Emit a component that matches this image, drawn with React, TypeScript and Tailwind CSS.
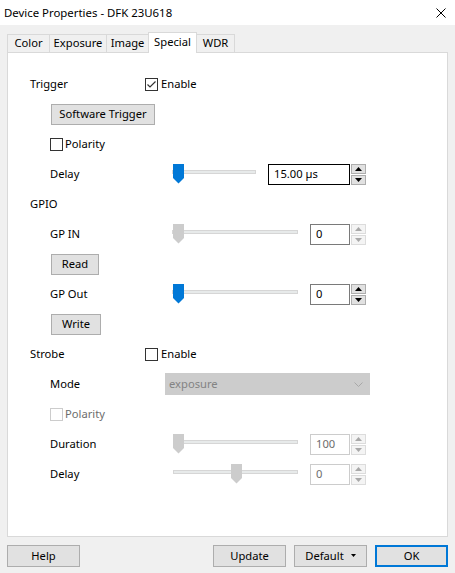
import React from 'react';

const font = { fontFamily: '"Segoe UI", "Noto Sans", "Liberation Sans", sans-serif' };

function Checkbox({ checked = false, disabled = false }: { checked?: boolean; disabled?: boolean }) {
  return (
    <div
      className={`w-[13px] h-[13px] bg-white border flex items-center justify-center ${
        disabled ? 'border-[#cccccc]' : 'border-[#333333]'
      }`}
    >
      {checked && (
        <svg width="11" height="11" viewBox="0 0 11 11">
          <path d="M1.5 5.5 L4 8 L9.5 2.5" fill="none" stroke="#333333" strokeWidth="1.2" />
        </svg>
      )}
    </div>
  );
}

function Btn({ label, w, className = '' }: { label: React.ReactNode; w: string; className?: string }) {
  return (
    <div
      className={`${w} h-[21px] bg-[#e1e1e1] border border-[#adadad] flex items-center justify-center text-black ${className}`}
    >
      {label}
    </div>
  );
}

function Slider({ w, pos, disabled = false }: { w: string; pos: number; disabled?: boolean }) {
  return (
    <div className={`relative ${w} h-[20px]`}>
      <div className="absolute left-0 right-0 top-[6px] h-[4px] bg-[#e7eaea] border border-[#d6d6d6]" />
      <svg
        className="absolute top-0"
        style={{ left: pos }}
        width="11"
        height="20"
        viewBox="0 0 11 20"
      >
        <polygon points="0,0 11,0 11,14 5.5,19.5 0,14" fill={disabled ? '#cccccc' : '#0078d7'} />
      </svg>
    </div>
  );
}

function Arrow({ up, color }: { up: boolean; color: string }) {
  return (
    <svg width="7" height="4" viewBox="0 0 7 4">
      <polygon points={up ? '3.5,0 7,4 0,4' : '0,0 7,0 3.5,4'} fill={color} />
    </svg>
  );
}

function Spin({ disabled = false }: { disabled?: boolean }) {
  const box = disabled
    ? 'bg-[#f4f4f4] border-[#dcdcdc]'
    : 'bg-[#e1e1e1] border-[#adadad]';
  const c = disabled ? '#a8a8a8' : '#000000';
  return (
    <div className="ml-[1px] w-[15px] h-[21px] flex flex-col gap-[1px]">
      <div className={`flex-1 border ${box} flex items-center justify-center`}>
        <Arrow up color={c} />
      </div>
      <div className={`flex-1 border ${box} flex items-center justify-center`}>
        <Arrow up={false} color={c} />
      </div>
    </div>
  );
}

function Edit({
  w,
  value,
  focused = false,
  disabled = false,
  spinDisabled = false,
}: {
  w: string;
  value: string;
  focused?: boolean;
  disabled?: boolean;
  spinDisabled?: boolean;
}) {
  const border = focused ? 'border-black' : disabled ? 'border-[#cccccc]' : 'border-[#7a7a7a]';
  return (
    <div className="flex items-center">
      <div
        className={`${w} h-[21px] bg-white border ${border} flex items-center pl-[5px] ${
          disabled ? 'text-[#6d6d6d]' : 'text-black'
        }`}
      >
        {value}
      </div>
      <Spin disabled={spinDisabled || disabled} />
    </div>
  );
}

function Row({ children, indent = false }: { children: React.ReactNode; indent?: boolean }) {
  return (
    <div className={`flex h-[30px] items-center ${indent ? 'pl-[42px]' : 'pl-[22px]'}`}>{children}</div>
  );
}

const tabs = [
  { name: 'Color', w: 'w-[43px]' },
  { name: 'Exposure', w: 'w-[58px]' },
  { name: 'Image', w: 'w-[43px]' },
  { name: 'Special', w: 'w-[49px]', active: true },
  { name: 'WDR', w: 'w-[39px]' },
];

export default function App() {
  return (
    <div className="w-[455px] h-[573px] bg-[#f0f0f0] flex flex-col text-[11.2px] text-black overflow-hidden" style={font}>
      {/* title bar */}
      <div className="h-[25px] bg-white flex items-center justify-between pl-[4px] pr-[9px] text-[11.4px]">
        <span>Device Properties - DFK 23U618</span>
        <svg width="10" height="10" viewBox="0 0 10 10">
          <path d="M0.5 0.5 L9.5 9.5 M9.5 0.5 L0.5 9.5" stroke="#000" strokeWidth="1" />
        </svg>
      </div>

      {/* tabs */}
      <div className="mt-[7px] px-[7px] flex items-end h-[20px]">
        {tabs.map((t) => (
          <div
            key={t.name}
            className={`${t.w} -ml-px first:ml-0 flex justify-center border border-b-0 border-[#d9d9d9] ${
              t.active
                ? 'h-[21px] bg-white relative z-10 -mb-px items-start pt-[1px]'
                : 'h-[18px] bg-[#f0f0f0] items-center'
            }`}
          >
            {t.name}
          </div>
        ))}
      </div>

      {/* panel */}
      <div className="mx-[7px] h-[485px] bg-white border border-[#d9d9d9] pt-[16px]">
        <Row>
          <span className="w-[115px]">Trigger</span>
          <Checkbox checked />
          <span className="ml-[3px]">Enable</span>
        </Row>
        <Row>
          <Btn label="Software Trigger" w="w-[104px]" className="ml-[21px]" />
        </Row>
        <Row indent>
          <Checkbox />
          <span className="ml-[2px]">Polarity</span>
        </Row>
        <Row indent>
          <span className="w-[122px]">Delay</span>
          <Slider w="w-[84px]" pos={1} />
          <div className="ml-[12px]">
            <Edit w="w-[82px]" value="15.00 µs" focused />
          </div>
        </Row>
        <Row>
          <span>GPIO</span>
        </Row>
        <Row indent>
          <span className="w-[122px]">GP IN</span>
          <Slider w="w-[126px]" pos={1} disabled />
          <div className="ml-[12px]">
            <Edit w="w-[40px]" value="0" spinDisabled />
          </div>
        </Row>
        <Row>
          <Btn label="Read" w="w-[48px]" className="ml-[21px]" />
        </Row>
        <Row indent>
          <span className="w-[122px]">GP Out</span>
          <Slider w="w-[126px]" pos={1} />
          <div className="ml-[12px]">
            <Edit w="w-[40px]" value="0" />
          </div>
        </Row>
        <Row>
          <Btn label="Write" w="w-[50px]" className="ml-[21px]" />
        </Row>
        <Row>
          <span className="w-[115px]">Strobe</span>
          <Checkbox />
          <span className="ml-[3px]">Enable</span>
        </Row>
        <Row indent>
          <span className="w-[115px]">Mode</span>
          <div className="w-[205px] h-[22px] bg-[#cccccc] border border-[#cccccc] flex items-center justify-between pl-[3px] pr-[6px] text-[#838383]">
            <span>exposure</span>
            <svg width="9" height="5" viewBox="0 0 9 5">
              <path d="M0.5 0.5 L4.5 4.5 L8.5 0.5" fill="none" stroke="#a8a8a8" strokeWidth="1" />
            </svg>
          </div>
        </Row>
        <Row indent>
          <Checkbox disabled />
          <span className="ml-[2px] text-[#6d6d6d]">Polarity</span>
        </Row>
        <Row indent>
          <span className="w-[123px]">Duration</span>
          <Slider w="w-[125px]" pos={0} disabled />
          <div className="ml-[12px]">
            <Edit w="w-[40px]" value="100" disabled />
          </div>
        </Row>
        <Row indent>
          <span className="w-[123px]">Delay</span>
          <Slider w="w-[125px]" pos={58} disabled />
          <div className="ml-[12px]">
            <Edit w="w-[40px]" value="0" disabled />
          </div>
        </Row>
      </div>

      {/* bottom buttons */}
      <div className="mt-[8px] px-[7px] flex items-center">
        <Btn label="Help" w="w-[73px]" className="h-[22px]" />
        <div className="flex-1" />
        <Btn label="Update" w="w-[73px]" className="h-[22px]" />
        <Btn
          label={
            <span className="flex items-center gap-[7px]">
              Default
              <svg width="5" height="3" viewBox="0 0 5 3">
                <polygon points="0,0 5,0 2.5,3" fill="#000" />
              </svg>
            </span>
          }
          w="w-[73px]"
          className="h-[22px] ml-[8px]"
        />
        <div className="ml-[8px] w-[73px] h-[22px] border-2 border-[#0078d7] bg-[#e1e1e1] flex items-center justify-center">
          OK
        </div>
      </div>
    </div>
  );
}
